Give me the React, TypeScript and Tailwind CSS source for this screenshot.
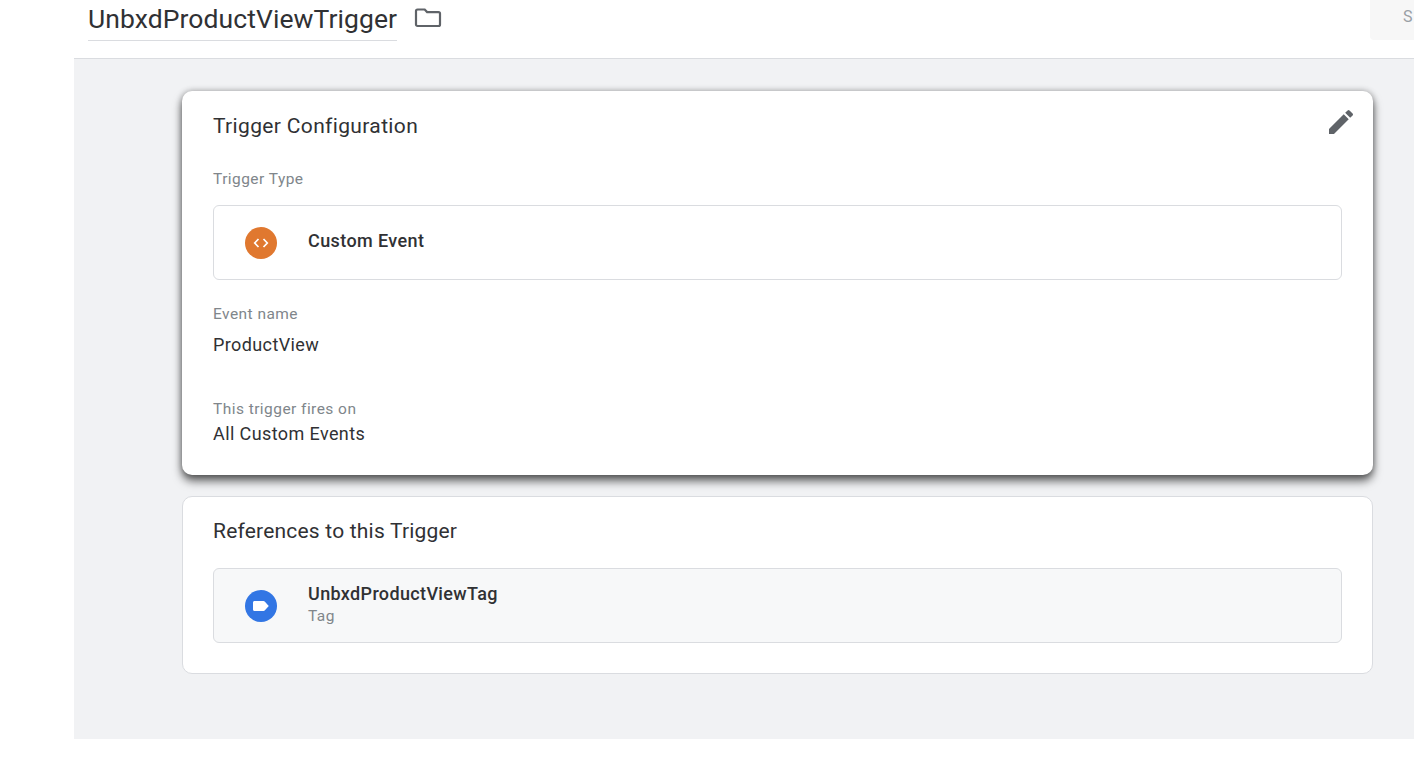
function FolderIcon() {
  return (
    <svg width="28" height="24" viewBox="0 0 28 24" fill="none">
      <path
        d="M3.5 3.500h7.200l2.400 2.600h11.400c.8 0 1.500.7 1.500 1.500v10.900c0 .8-.7 1.500-1.500 1.500H3.500c-.8 0-1.500-.7-1.500-1.500V5c0-.8.7-1.500 1.500-1.500z"
        stroke="#5f6368"
        strokeWidth="2.200"
      />
    </svg>
  );
}

function EditIcon() {
  return (
    <svg width="32" height="32" viewBox="0 0 24 24" fill="#5f6368">
      <path d="M3 17.250V21h3.750L17.810 9.940l-3.750-3.750L3 17.250zM20.710 7.040a1 1 0 0 0 0-1.410l-2.340-2.340a1 1 0 0 0-1.410 0l-1.830 1.830 3.750 3.750 1.830-1.830z" />
    </svg>
  );
}

function App() {
  return (
    <div className="w-[1426px] h-[758px] bg-white overflow-hidden font-['Roboto',sans-serif] text-[#3c4043]">
      <div className="w-[1414px] h-[739px] pl-[74px] flex flex-col">
        {/* Header */}
        <header className="h-[59px] shrink-0 border-b border-[#dadce0] flex items-start justify-between">
          <div className="flex items-start pl-[14px]">
            <h1 className="h-[41px] w-[309px] border-b border-[#dadce0] text-[26.500px] leading-[37px] tracking-[0.08px] text-[#303134] whitespace-nowrap">
              UnbxdProductViewTrigger
            </h1>
            <span className="ml-[17px] mt-[6px]">
              <FolderIcon />
            </span>
          </div>
          <div className="w-[44px] h-[40px] bg-[#f7f7f7] rounded-bl-[4px] pl-[33px] pt-[6px] text-[16px] leading-[22px] text-[#9aa0a6] overflow-hidden">
            S
          </div>
        </header>

        {/* Content */}
        <main className="flex-1 bg-[#f1f2f4] pl-[108px] pr-[41px] pt-[32px]">
          <section className="relative h-[384px] bg-white rounded-[10px] px-[31px] pt-[21px] shadow-[0_6px_10px_rgba(0,0,0,0.6),0_0_6px_rgba(0,0,0,0.3)]">
            <h2 className="text-[21px] leading-[28px] tracking-[0.35px] text-[#303134]">Trigger Configuration</h2>
            <button className="absolute right-[16px] top-[15px]">
              <EditIcon />
            </button>
            <div className="mt-[29px] text-[15.500px] leading-[20px] tracking-[0.45px] text-[#80868b]">Trigger Type</div>
            <div className="mt-[16px] h-[75px] border border-[#dadce0] rounded-[6px] flex items-center pl-[31px]">
              <span className="w-[32px] h-[32px] rounded-full bg-[#e0782f] flex items-center justify-center">
                <svg width="16" height="12" viewBox="0 0 16 12" fill="none" stroke="white" strokeWidth="1.700">
                  <path d="M5.500 2 1.700 6l3.800 4M10.500 2l3.800 4-3.800 4" />
                </svg>
              </span>
              <span className="ml-[31px] mb-[4px] text-[18px] leading-[24px] tracking-[0.4px] font-medium text-[#303134]">
                Custom Event
              </span>
            </div>
            <div className="mt-[24px] text-[15.500px] leading-[20px] tracking-[0.45px] text-[#80868b]">Event name</div>
            <div className="mt-[9px] text-[18px] leading-[24px] tracking-[0.4px] text-[#303134]">ProductView</div>
            <div className="mt-[42px] text-[15.500px] leading-[20px] tracking-[0.45px] text-[#80868b]">This trigger fires on</div>
            <div className="mt-[3px] text-[18px] leading-[24px] tracking-[0.4px] text-[#303134]">All Custom Events</div>
          </section>

          <section className="mt-[21px] h-[178px] bg-white border border-[#dadce0] rounded-[10px] px-[30px] pt-[20px]">
            <h2 className="text-[21px] leading-[28px] tracking-[0.2px] text-[#303134]">References to this Trigger</h2>
            <div className="mt-[23px] h-[75px] bg-[#f7f8f9] border border-[#dadce0] rounded-[6px] flex items-center pl-[31px]">
              <span className="w-[32px] h-[32px] rounded-full bg-[#3276e4] flex items-center justify-center">
                <svg width="18" height="12" viewBox="0 0 18 12" fill="white">
                  <path d="M2.500 1h9c.6 0 1.100.3 1.400.7L16.800 6l-3.900 4.300c-.3.4-.8.7-1.400.7h-9C1.700 11 1 10.300 1 9.500v-7C1 1.700 1.700 1 2.500 1z" />
                </svg>
              </span>
              <div className="ml-[31px] mb-[4px]">
                <div className="text-[18px] leading-[24px] tracking-[0.35px] font-medium text-[#303134]">UnbxdProductViewTag</div>
                <div className="text-[15.500px] leading-[20px] tracking-[0.45px] text-[#80868b]">Tag</div>
              </div>
            </div>
          </section>
        </main>
      </div>
    </div>
  );
}

export default App;
